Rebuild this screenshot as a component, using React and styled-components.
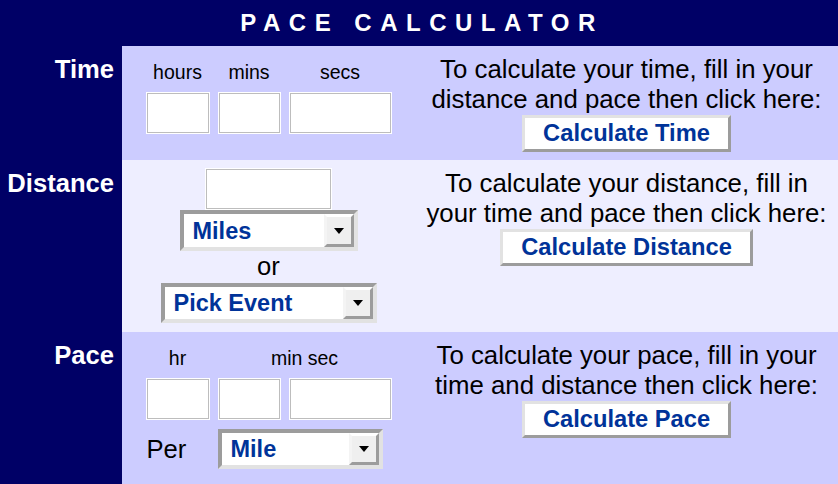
import React from 'react';
import styled, { createGlobalStyle } from 'styled-components';

const NAVY = '#000066';

const GlobalStyle = createGlobalStyle`
  body {
    margin: 0;
    background: ${NAVY};
    font-family: "Liberation Sans", Arial, Helvetica, sans-serif;
  }
`;

function App() {
  return (
    <>
      <GlobalStyle />
      <StPage>
        <StTitle>PACE CALCULATOR</StTitle>

        <StRow $tint="#ccccff">
          <StLabel>Time</StLabel>
          <StFields>
            <StFieldName>hours</StFieldName>
            <StFieldName>mins</StFieldName>
            <StFieldName>secs</StFieldName>
            <StBox type="text" />
            <StBox type="text" />
            <StBox type="text" />
          </StFields>
          <StHelp>
            To calculate your time, fill in your distance and pace then click here:
            <br />
            <StButton type="button">Calculate Time</StButton>
          </StHelp>
        </StRow>

        <StRow $tint="#eeeeff">
          <StLabel>Distance</StLabel>
          <StStack>
            <StBox type="text" $width={127} />
            <Dropdown width={178} height={41} value="Miles" />
            <StOr>or</StOr>
            <Dropdown width={216} height={40} value="Pick Event" gap={2} />
          </StStack>
          <StHelp>
            To calculate your distance, fill in your time and pace then click here:
            <br />
            <StButton type="button">Calculate Distance</StButton>
          </StHelp>
        </StRow>

        <StRow $tint="#ccccff" $grow>
          <StLabel>Pace</StLabel>
          <StFields>
            <StFieldName>hr</StFieldName>
            <StFieldName $span={2}>min sec</StFieldName>
            <StBox type="text" />
            <StBox type="text" />
            <StBox type="text" />
            <StPer>Per</StPer>
            <StPerSelect>
              <Dropdown width={165} height={40} value="Mile" />
            </StPerSelect>
          </StFields>
          <StHelp>
            To calculate your pace, fill in your time and distance then click here:
            <br />
            <StButton type="button">Calculate Pace</StButton>
          </StHelp>
        </StRow>
      </StPage>
    </>
  );
}

function Dropdown({ width, height, value, gap = 0 }) {
  return (
    <StSelectFrame $w={width} $h={height} $gap={gap}>
      <StSelect defaultValue={value}>
        <option>{value}</option>
      </StSelect>
      <StArrowBox>
        <StArrow />
      </StArrowBox>
    </StSelectFrame>
  );
}

export default App;

const StPage = styled.div`
  min-height: 100vh;
  display: flex;
  flex-direction: column;
  background: ${NAVY};
`;

const StTitle = styled.h1`
  margin: 0;
  height: 46px;
  line-height: 46px;
  padding-left: 6px;
  text-align: center;
  color: #fff;
  font-size: 24px;
  font-weight: bold;
  letter-spacing: 8.5px;
`;

const StRow = styled.section`
  display: grid;
  grid-template-columns: 122px 293px 1fr;
  background: ${(p) => p.$tint};
  flex: ${(p) => (p.$grow ? 1 : 'none')};
`;

const StLabel = styled.div`
  background: ${NAVY};
  color: #fff;
  font-size: 25.6px;
  font-weight: bold;
  line-height: 30px;
  text-align: right;
  padding: 8px 8px 0 0;
`;

const StFields = styled.div`
  display: grid;
  grid-template-columns: 64px 63px 103px;
  column-gap: 8px;
  justify-content: center;
  align-content: start;
  padding-top: 14px;
`;

const StFieldName = styled.span`
  grid-column: span ${(p) => p.$span || 1};
  font-size: 19.5px;
  line-height: 24px;
  text-align: center;
  color: #000;
  margin-bottom: 8px;
`;

const StBox = styled.input`
  box-sizing: border-box;
  width: ${(p) => (p.$width ? `${p.$width}px` : '100%')};
  height: 42px;
  margin: 0;
  padding: 0 4px;
  border: 1px solid #fff;
  box-shadow: inset 0 0 0 1px #bdbdbd;
  background: #fff;
  font-size: 18px;
  outline: none;
`;

const StPer = styled.span`
  align-self: center;
  margin-top: 9px;
  padding-left: 1px;
  font-size: 25.6px;
  line-height: 30px;
  color: #000;
`;

const StPerSelect = styled.div`
  grid-column: span 2;
  margin-top: 9px;
`;

const StStack = styled.div`
  display: flex;
  flex-direction: column;
  align-items: center;
  padding: 8px 0 9px;
`;

const StOr = styled.span`
  font-size: 25.6px;
  line-height: 30px;
  color: #000;
`;

const StSelectFrame = styled.div`
  position: relative;
  box-sizing: border-box;
  width: ${(p) => p.$w}px;
  height: ${(p) => p.$h}px;
  margin-top: ${(p) => p.$gap}px;
  border: 4px solid;
  border-color: #9c9c9c #e2e2e2 #e2e2e2 #9c9c9c;
  background: #fff;
`;

const StSelect = styled.select`
  appearance: none;
  width: 100%;
  height: 100%;
  margin: 0;
  padding: 0 0 0 9px;
  border: none;
  background: #fff;
  color: #003399;
  font-family: "Liberation Sans", Arial, Helvetica, sans-serif;
  font-size: 23.5px;
  font-weight: bold;
  outline: none;
`;

const StArrowBox = styled.div`
  position: absolute;
  top: 0;
  right: 0;
  bottom: 0;
  width: 30px;
  box-sizing: border-box;
  border: 3px solid;
  border-color: #fff #9c9c9c #9c9c9c #f4f4f4;
  background: #efefef;
  display: flex;
  align-items: center;
  justify-content: center;
  pointer-events: none;
`;

const StArrow = styled.span`
  width: 0;
  height: 0;
  border-left: 5px solid transparent;
  border-right: 5px solid transparent;
  border-top: 6px solid #000;
`;

const StHelp = styled.div`
  padding: 8px 6px;
  text-align: center;
  font-size: 25.8px;
  line-height: 30px;
  color: #000;
`;

const StButton = styled.button`
  height: 37px;
  margin-top: 1px;
  padding: 0 18px;
  border: 3px solid;
  border-color: #e2e2e2 #9c9c9c #9c9c9c #e2e2e2;
  background: #fff;
  color: #003399;
  font-family: "Liberation Sans", Arial, Helvetica, sans-serif;
  font-size: 23.7px;
  font-weight: bold;
  line-height: 31px;
  vertical-align: top;
  cursor: pointer;
`;
